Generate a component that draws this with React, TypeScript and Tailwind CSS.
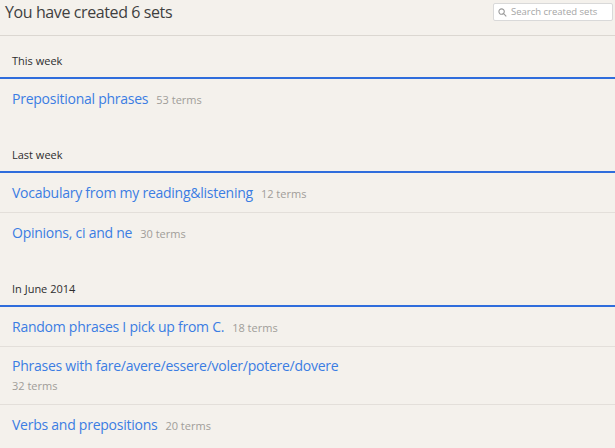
import React from "react";

type SetItem = { title: string; terms: number; wrap?: boolean };
type Section = { label: string; items: SetItem[] };

const sections: Section[] = [
  { label: "This week", items: [{ title: "Prepositional phrases", terms: 53 }] },
  {
    label: "Last week",
    items: [
      { title: "Vocabulary from my reading&listening", terms: 12 },
      { title: "Opinions, ci and ne", terms: 30 },
    ],
  },
  {
    label: "In June 2014",
    items: [
      { title: "Random phrases I pick up from C.", terms: 18 },
      { title: "Phrases with fare/avere/essere/voler/potere/dovere", terms: 32, wrap: true },
      { title: "Verbs and prepositions", terms: 20 },
    ],
  },
];

function Row({ item, last }: { item: SetItem; last: boolean }) {
  if (item.wrap) {
    return (
      <div className={`px-3 h-[58px] pt-[10px] ${last ? "" : "border-b border-[#e3dfda]"}`}>
        <div className="text-[14px] leading-[18px] text-[#3b7de3] tracking-[-0.25px]">{item.title}</div>
        <div className="text-[11px] leading-[18px] mt-[2px] text-[#a09d99]">{item.terms} terms</div>
      </div>
    );
  }
  return (
    <div className={`px-3 h-[40px] flex items-center ${last ? "" : "border-b border-[#e3dfda]"}`}>
      <span className="text-[14px] leading-[18px] text-[#3b7de3] tracking-[-0.25px]">{item.title}</span>
      <span className="ml-[8px] text-[11px] leading-[18px] text-[#a09d99] mt-[2px]">{item.terms} terms</span>
    </div>
  );
}

export default function App() {
  return (
    <div
      className="w-[615px] h-[448px] overflow-hidden bg-[#f4f1ec] text-[#333]"
      style={{ fontFamily: '"Open Sans", "Noto Sans", Arial, sans-serif' }}
    >
      <div className="h-[36px] border-b border-[#dbd7d1] flex items-start justify-between pl-[5px] pr-[2px]">
        <div className="text-[16px] leading-[24px] text-[#3f3f3f] tracking-[-0.4px]">You have created 6 sets</div>
        <div className="mt-[3px] w-[120px] h-[18px] bg-white border border-[#d9d9d9] rounded-[2px] flex items-center pl-[4px] gap-[4px]">
          <svg width="9" height="9" viewBox="0 0 10 10" fill="none" stroke="#9a9a9a" strokeWidth="1.2">
            <circle cx="4" cy="4" r="3" />
            <path d="M6.2 6.2 L9.2 9.2" />
          </svg>
          <span className="text-[9.5px] leading-none text-[#a5a5a5]">Search created sets</span>
        </div>
      </div>
      {sections.map((s, i) => (
        <div key={s.label} className={i === 0 ? "" : "mt-[11px]"}>
          <div className="h-[43px] border-b-2 border-[#2f6ddc] px-3 pt-[18px]">
            <div className="text-[11px] leading-[14px] text-[#2e2e2e]">{s.label}</div>
          </div>
          {s.items.map((it, j) => (
            <Row key={it.title} item={it} last={j === s.items.length - 1} />
          ))}
        </div>
      ))}
    </div>
  );
}
